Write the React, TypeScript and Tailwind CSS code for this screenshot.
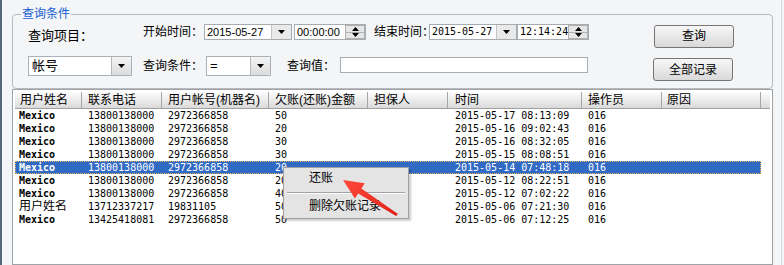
import React from 'react';

const cols = [
  { title: '用户姓名', w: 'w-[67px]', pad: 'pl-[5px]' },
  { title: '联系电话', w: 'w-[80px]', pad: 'pl-[6px]' },
  { title: '用户帐号(机器名)', w: 'w-[107px]', pad: 'pl-[6px]' },
  { title: '欠账(还账)金额', w: 'w-[99px]', pad: 'pl-[6px]' },
  { title: '担保人', w: 'w-[80px]', pad: 'pl-[6px]' },
  { title: '时间', w: 'w-[134px]', pad: 'pl-[7px]' },
  { title: '操作员', w: 'w-[80px]', pad: 'pl-[6px]' },
  { title: '原因', w: 'w-[99px]', pad: 'pl-[5px]' },
];

const rows = [
  ['Mexico', '13800138000', '2972366858', '50', '', '2015-05-17 08:13:09', '016', ''],
  ['Mexico', '13800138000', '2972366858', '20', '', '2015-05-16 09:02:43', '016', ''],
  ['Mexico', '13800138000', '2972366858', '30', '', '2015-05-16 08:32:05', '016', ''],
  ['Mexico', '13800138000', '2972366858', '30', '', '2015-05-15 08:08:51', '016', ''],
  ['Mexico', '13800138000', '2972366858', '20', '', '2015-05-14 07:48:18', '016', ''],
  ['Mexico', '13800138000', '2972366858', '20', '', '2015-05-12 08:22:51', '016', ''],
  ['Mexico', '13800138000', '2972366858', '40', '', '2015-05-12 07:02:22', '016', ''],
  ['用户姓名', '13712337217', '19831105', '50', '', '2015-05-06 07:21:30', '016', ''],
  ['Mexico', '13425418081', '2972366858', '50', '', '2015-05-06 07:12:25', '016', ''],
];

const Tri = ({ up = false }: { up?: boolean }) => (
  <svg width="7" height="4" viewBox="0 0 7 4">
    <polygon points={up ? '0,4 7,4 3.5,0' : '0,0 7,0 3.5,4'} fill="#000" />
  </svg>
);

const Combo = ({ value, w }: { value: string; w: string }) => (
  <div className={`flex h-[20px] border border-[#a9b0b8] bg-white ${w}`}>
    <span className="flex-1 pl-[3px] text-[13px] leading-[18px]">{value}</span>
    <div className="flex w-[20px] items-center justify-center rounded-r-[2px] border-l border-[#b8b8b8] bg-linear-to-b from-[#f4f4f4] to-[#dcdcdc]">
      <Tri />
    </div>
  </div>
);

const DateBox = ({ value, mono }: { value: string; mono?: boolean }) => (
  <div className="mt-[1px] flex h-[16px] w-[88px] border border-[#a5acb2] bg-white">
    <span className={`flex-1 pl-[2px] leading-[14px] ${mono ? "font-['DejaVu_Sans_Mono',monospace] text-[10px]" : 'text-[11px]'}`}>{value}</span>
    <div className="flex w-[20px] items-center justify-center border-l border-[#c4c4c4] bg-[#e9e9e9]">
      <Tri />
    </div>
  </div>
);

const TimeBox = ({ value, mono }: { value: string; mono?: boolean }) => (
  <div className="mt-[1px] flex h-[16px] w-[72px] border border-[#a5acb2] bg-white">
    <span className={`flex-1 pl-[2px] leading-[14px] ${mono ? "font-['DejaVu_Sans_Mono',monospace] text-[10px]" : 'text-[11px]'}`}>{value}</span>
    <div className="flex w-[20px] flex-col">
      <div className="flex flex-1 items-center justify-center border border-[#b0b0b0] bg-[#e6e6e6]">
        <Tri up />
      </div>
      <div className="flex flex-1 items-center justify-center border border-t-0 border-[#b0b0b0] bg-[#e6e6e6]">
        <Tri />
      </div>
    </div>
  </div>
);

const Btn = ({ children }: { children: React.ReactNode }) => (
  <button className="h-[23px] w-[80px] rounded-[3px] border border-[#767676] bg-linear-to-b from-[#f7f7f7] to-[#d9d9d9] text-[12px] leading-[20px] text-black">
    {children}
  </button>
);

export default function App() {
  return (
    <div className="relative flex h-[265px] w-[784px] overflow-hidden bg-[#f4f5f7] font-['Liberation_Sans','Noto_Sans_CJK_SC',sans-serif] text-black">
      <div className="w-[2px] bg-[#56667c]" />

      <div className="ml-[10px] flex w-[761px] flex-col">
        <fieldset className="mt-[7px] rounded-[4px] border border-[#b9b9bd] pb-[7px]">
          <legend className="ml-[8px] px-[1px] text-[12px] leading-[14px] text-[#1560d0]">查询条件</legend>

          <div className="mt-[2px] flex items-start">
            <span className="ml-[15px] mt-[5px] w-[115px] whitespace-nowrap text-[13px] leading-[16px]">查询项目：</span>
            <span className="mt-[1px] w-[61px] whitespace-nowrap text-[12px] leading-[16px]">开始时间：</span>
            <DateBox value="2015-05-27" />
            <div className="ml-[2px]">
              <TimeBox value="00:00:00" />
            </div>
            <span className="ml-[8px] mt-[1px] w-[55px] whitespace-nowrap text-[12px] leading-[16px]">结束时间：</span>
            <DateBox value="2015-05-27" mono />
            <TimeBox value="12:14:24" mono />
            <div className="ml-[65px]">
              <Btn>查询</Btn>
            </div>
          </div>

          <div className="mt-[8px] flex items-start">
            <div className="ml-[15px]">
              <Combo value="帐号" w="w-[104px]" />
            </div>
            <span className="ml-[11px] w-[63px] whitespace-nowrap text-[12px] leading-[20px]">查询条件：</span>
            <Combo value="=" w="w-[65px]" />
            <span className="ml-[16px] w-[53px] whitespace-nowrap text-[12px] leading-[20px]">查询值：</span>
            <div className="mt-[1px] h-[16px] w-[248px] border border-[#a5acb2] bg-white" />
            <div className="ml-[65px] mt-[1px]">
              <Btn>全部记录</Btn>
            </div>
          </div>
        </fieldset>

        <div className="flex-1 border border-[#9ea3a8] bg-white p-[2px]">
          <div className="flex h-[17px] border-b border-[#a0a0a0] bg-linear-to-b from-[#fdfdfd] to-[#dadada]">
            {cols.map((c) => (
              <div key={c.title} className={`${c.w} ${c.pad} shrink-0 border-r border-[#a6a6a6] text-[12px] leading-[16px]`}>
                {c.title}
              </div>
            ))}
            <div className="flex-1" />
          </div>

          {rows.map((r, i) => {
            const sel = i === 4;
            return (
              <div
                key={i}
                className={`flex h-[13px] w-[746px] font-['DejaVu_Sans_Mono','Noto_Sans_CJK_SC',monospace] text-[10px] leading-[13px] ${sel ? 'bg-[#316ac5] text-white outline-1 -outline-offset-1 outline-dotted outline-[#e9b25a]' : ''}`}
              >
                {r.map((v, j) => (
                  <div
                    key={j}
                    className={`${cols[j].w} shrink-0 overflow-hidden whitespace-nowrap ${j === 0 ? 'pl-[4px]' : j === 5 ? 'pl-[7px]' : 'pl-[6px]'} ${v === 'Mexico' ? 'font-bold' : ''} ${v === '用户姓名' ? 'text-[12px]' : ''}`}
                  >
                    {v}
                  </div>
                ))}
              </div>
            );
          })}
        </div>
      </div>

      <div className="ml-[8px] w-[1px] bg-[#d3d9e0]" />

      {/* context menu */}
      <div className="absolute left-[283px] top-[167px] flex h-[52px] w-[126px] flex-col border border-[#a0a0a0] bg-[#e4e4e4] shadow-[2px_2px_2px_rgba(0,0,0,0.2)]">
        <div className="h-[20px] pl-[25px] text-[12px] leading-[20px]">还账</div>
        <div className="flex h-[9px] items-center px-[3px]">
          <div className="h-[2px] w-full border-t border-b border-t-[#a3a3a3] border-b-white" />
        </div>
        <div className="h-[20px] pl-[25px] text-[12px] leading-[19px]">删除欠账记录</div>
      </div>

      {/* red arrow */}
      <svg className="absolute left-[338px] top-[175px]" width="64" height="45" viewBox="0 0 64 45">
        <defs>
          <linearGradient id="ar" x1="0" y1="0" x2="1" y2="1">
            <stop offset="0" stopColor="#ff4a3a" />
            <stop offset="1" stopColor="#e0201a" />
          </linearGradient>
        </defs>
        <polygon points="5,5 26.7,8.3 23.4,13.4 60,39 58,41 20.2,18.4 16.9,23.5" fill="url(#ar)" />
      </svg>
    </div>
  );
}
